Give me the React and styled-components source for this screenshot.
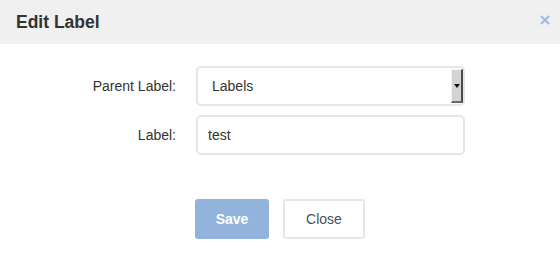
import React from "react";
import styled, { createGlobalStyle } from "styled-components";

const Global = createGlobalStyle`
  html, body { margin: 0; padding: 0; background: #fff; }
  body { font-family: "Liberation Sans", Arial, sans-serif; }
`;

const Modal = styled.div`
  width: 560px;
  height: 254px;
  box-sizing: border-box;
  background: #fff;
  border-radius: 0 0 5px 5px;
  display: flex;
  flex-direction: column;
`;

const Header = styled.div`
  height: 44px;
  background: #f0f0f0;
  display: flex;
  align-items: center;
  justify-content: space-between;
  padding: 0 9px 0 16px;
  box-sizing: border-box;
`;

const Title = styled.h3`
  margin: 0;
  font-size: 17.5px;
  font-weight: bold;
  color: #333;
`;

const CloseX = styled.button`
  border: 0;
  background: none;
  padding: 0;
  width: 12px;
  height: 12px;
  display: flex;
  align-items: center;
  justify-content: center;
  margin-bottom: 4px;
`;

const Body = styled.div`
  padding: 22px 0 0 0;
  display: flex;
  flex-direction: column;
  gap: 9px;
`;

const Row = styled.div`
  display: flex;
  align-items: center;
`;

const FieldLabel = styled.label`
  width: 196px;
  text-align: right;
  padding-right: 20px;
  box-sizing: border-box;
  font-size: 14px;
  color: #333;
`;

const Control = styled.div`
  width: 269px;
  height: 40px;
  box-sizing: border-box;
  border: 2px solid #e2e7ee;
  border-radius: 5px;
  display: flex;
  align-items: center;
  padding-left: ${(p) => p.$pad}px;
  font-size: 14px;
  color: #333;
`;

const ControlText = styled.span`
  flex: 1;
`;

const ArrowBox = styled.span`
  width: 12px;
  height: 34px;
  background: #d4d4d4;
  border-right: 2px solid #4a4a4a;
  border-bottom: 2px solid #6a6a6a;
  border-top: 1px solid #f4f4f4;
  border-left: 1px solid #f4f4f4;
  box-sizing: border-box;
  display: flex;
  align-items: center;
  justify-content: center;
`;

const Footer = styled.div`
  display: flex;
  gap: 14px;
  padding: 44px 0 0 195px;
`;

const Button = styled.button`
  height: 40px;
  box-sizing: border-box;
  border-radius: 3px;
  font-family: "Liberation Sans", Arial, sans-serif;
  font-size: 14px;
  padding: 0;
  width: ${(p) => p.$w}px;
  background: ${(p) => (p.$primary ? "#92b4dc" : "#fff")};
  color: ${(p) => (p.$primary ? "#fff" : "#4a4f5a")};
  font-weight: ${(p) => (p.$primary ? "bold" : "normal")};
  border: ${(p) => (p.$primary ? "none" : "2px solid #e2e7ee")};
`;

export default function App() {
  return (
    <>
      <Global />
      <Modal>
        <Header>
          <Title>Edit Label</Title>
          <CloseX aria-label="close">
            <svg width="10" height="10" viewBox="0 0 10 10">
              <path d="M1 1L9 9M9 1L1 9" stroke="#9dbbe0" strokeWidth="2" />
            </svg>
          </CloseX>
        </Header>
        <Body>
          <Row>
            <FieldLabel>Parent Label:</FieldLabel>
            <Control $pad={14}>
              <ControlText>Labels</ControlText>
              <ArrowBox>
                <svg width="6" height="4" viewBox="0 0 6 4">
                  <path d="M0 0H6L3 4Z" fill="#111" />
                </svg>
              </ArrowBox>
            </Control>
          </Row>
          <Row>
            <FieldLabel>Label:</FieldLabel>
            <Control $pad={10}>
              <ControlText>test</ControlText>
            </Control>
          </Row>
        </Body>
        <Footer>
          <Button $primary $w={74}>Save</Button>
          <Button $w={82}>Close</Button>
        </Footer>
      </Modal>
    </>
  );
}
